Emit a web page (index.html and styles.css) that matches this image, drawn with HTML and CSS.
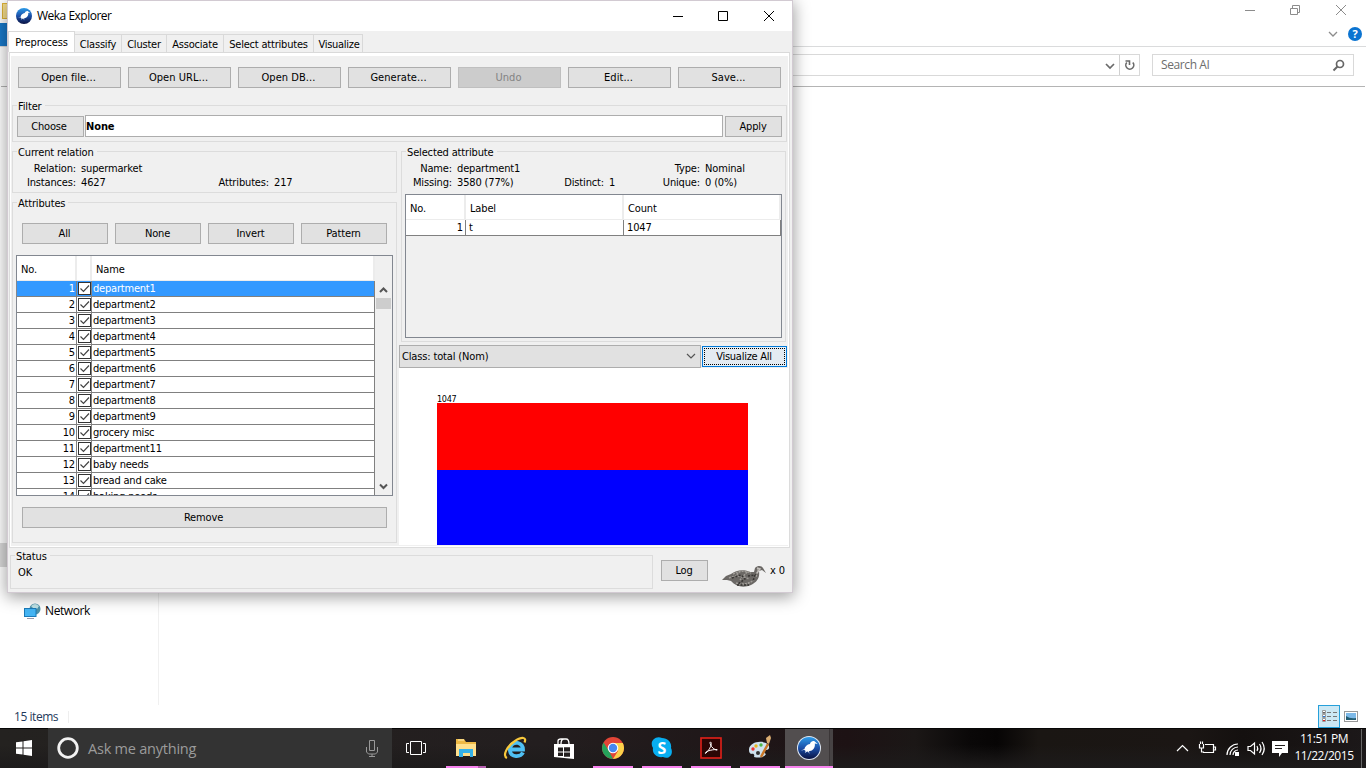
FILE: index.html
```html
<!DOCTYPE html>
<html lang="en">
<head>
<meta charset="utf-8">
<title>Weka Explorer</title>
<link rel="stylesheet" href="styles.css">
</head>
<body>
<svg width="0" height="0" class="defs">
  <symbol id="check" viewBox="0 0 13 13"><rect x=".5" y=".5" width="12" height="12" fill="#fff" stroke="#333"/><path d="M2.500 6.500l3 3 5.500-6" fill="none" stroke="#444" stroke-width="1.200"/></symbol>
  <symbol id="weka" viewBox="0 0 24 24"><circle cx="12" cy="12" r="12" fill="url(#wk)"/><path d="M3 15l4-2c.5-3 3-5 6-5.500 1-2.500 3-3.500 5-2.800l3.500 3-3.200-.7c.8 3.500-1.300 7-4.300 8l-2 .6.500 3-1.500-2.700-1.500.1-2 1.500.8-2.300c-.8-.3-1.300-.7-1.500-1.200z" fill="#fff"/></symbol>
  <linearGradient id="wk" x1="0" y1="0" x2="0" y2="1"><stop offset="0" stop-color="#2d9be8"/><stop offset=".5" stop-color="#1b4fa8"/><stop offset="1" stop-color="#0a1242"/></linearGradient>
</svg>

<div class="explorer">
  <div class="ex-title">
    <svg width="110" height="20" fill="none" stroke="#8c8c8c"><path d="M5 10.500h10M50.500 8.500h7v6h-7zM52.500 8v-2.500h7v7h-2M96 5l10 10M106 5l-10 10"/></svg>
  </div>
  <div class="ex-ribbon">
    <svg width="36" height="18"><path d="M1 7l4 4 4-4" fill="none" stroke="#8c8c8c" stroke-width="1.300"/><circle cx="27" cy="9" r="7" fill="#0b74d1"/><text x="27" y="13" text-anchor="middle" fill="#fff" class="help">?</text></svg>
  </div>
  <div class="ex-address">
    <div class="ex-path"><svg width="34" height="20" fill="none" stroke="#6a6a6a" stroke-width="1.700"><path d="M1 9l4 4 4-4"/><path stroke="#d0d0d0" stroke-width="1" d="M14.500 0v20"/><path d="M21.800 7.500a4 4 0 1 0 6 0M20.500 6h4v4" stroke-width="1.600"/></svg></div>
    <div class="ex-search"><span>Search AI</span><svg width="14" height="14" fill="none" stroke="#666" stroke-width="1.700"><circle cx="8" cy="6" r="3.500"/><path d="M5.500 8.500l-4 4" stroke-width="2"/></svg></div>
  </div>
  <div class="ex-body">
    <div class="ex-nav"><div class="ex-selected"></div>
      <div class="ex-net"><svg width="17" height="17"><circle cx="11" cy="6" r="5.500" fill="#4e93ab"/><path d="M7 3q4-4 8 0l-2 3-4-1z" fill="#bfe2e6"/><rect x=".5" y="5.500" width="11.500" height="8" fill="#45b5f4" stroke="#1b7ab8"/><path d="M3 15.500h7" stroke="#99a"/></svg><span>Network</span></div>
    </div>
  </div>
  <div class="ex-status"><span class="items">15 items</span>
    <div class="views"><div class="view-on"><svg width="22" height="22"><g fill="#fff" stroke="#9a9a9a"><path d="M4.500 5.500h3v3h-3zM4.500 9.500h3v3h-3zM4.500 13.500h3v3h-3z"/></g><path d="M5 7.500h2" stroke="#666"/><path d="M5 11.500h2" stroke="#27d"/><path d="M5 15.500h2" stroke="#d22"/><path d="M9 7.500h4M15 7.500h4M9 11.500h4M15 11.500h4M9 15.500h4M15 15.500h4" stroke="#777"/></svg></div>
    <svg width="14" height="12"><rect x=".5" y=".5" width="13" height="10" fill="#fff" stroke="#999"/><rect x="2" y="2" width="10" height="7" fill="#7db9e8"/><path d="M2 5q4 3 10 2v2h-10z" fill="#245d72"/></svg></div>
  </div>
</div>
<div class="backstrip"><div class="folder"></div><div class="filetab"></div></div>

<div class="weka">
  <div class="titlebar"><svg width="16" height="16"><use href="#weka"/></svg><span>Weka Explorer</span>
    <svg class="controls" width="102" height="12" fill="none" stroke="#000"><path d="M0 6.500h10M45.500 1.500h9v9h-9zM91 1l10 10M101 1l-10 10"/></svg></div>
  <div class="tabs"><div class="tab on">Preprocess</div><div class="tab t2">Classify</div><div class="tab t3">Cluster</div><div class="tab t4">Associate</div><div class="tab t5">Select attributes</div><div class="tab t6">Visualize</div></div>
  <div class="pane">
    <div class="toolbar"><div class="btn">Open file...</div><div class="btn">Open URL...</div><div class="btn">Open DB...</div><div class="btn">Generate...</div><div class="btn off">Undo</div><div class="btn">Edit...</div><div class="btn">Save...</div></div>
    <div class="group filter"><div class="legend">Filter</div>
      <div class="filter-row"><div class="btn choose">Choose</div><div class="field">None</div><div class="btn apply">Apply</div></div></div>
    <div class="columns">
      <div class="left">
        <div class="group relation"><div class="legend">Current relation</div>
          <div class="rel"><span class="r">Relation:</span><span>supermarket</span><span></span><span></span><span class="r">Instances:</span><span>4627</span><span class="r">Attributes:</span><span>217</span></div></div>
        <div class="group attrs"><div class="legend">Attributes</div>
          <div class="four"><div class="btn">All</div><div class="btn">None</div><div class="btn">Invert</div><div class="btn">Pattern</div></div>
          <div class="list">
            <div class="grid">
              <div class="head"><span>No.</span><span></span><span>Name</span></div>
              <div class="row sel"><span>1</span><svg><use href="#check"/></svg><span>department1</span></div>
              <div class="row"><span>2</span><svg><use href="#check"/></svg><span>department2</span></div>
              <div class="row"><span>3</span><svg><use href="#check"/></svg><span>department3</span></div>
              <div class="row"><span>4</span><svg><use href="#check"/></svg><span>department4</span></div>
              <div class="row"><span>5</span><svg><use href="#check"/></svg><span>department5</span></div>
              <div class="row"><span>6</span><svg><use href="#check"/></svg><span>department6</span></div>
              <div class="row"><span>7</span><svg><use href="#check"/></svg><span>department7</span></div>
              <div class="row"><span>8</span><svg><use href="#check"/></svg><span>department8</span></div>
              <div class="row"><span>9</span><svg><use href="#check"/></svg><span>department9</span></div>
              <div class="row"><span>10</span><svg><use href="#check"/></svg><span>grocery misc</span></div>
              <div class="row"><span>11</span><svg><use href="#check"/></svg><span>department11</span></div>
              <div class="row"><span>12</span><svg><use href="#check"/></svg><span>baby needs</span></div>
              <div class="row"><span>13</span><svg><use href="#check"/></svg><span>bread and cake</span></div>
              <div class="row"><span>14</span><svg><use href="#check"/></svg><span>baking needs</span></div>
            </div>
            <div class="scroll"><svg width="17" height="214"><path d="M5 10l3.500-3.500L12 10M5 202.500l3.500 3.500 3.500-3.500" fill="none" stroke="#555" stroke-width="2"/><rect x="1" y="16" width="15" height="11" fill="#cdcdcd"/></svg></div>
          </div>
          <div class="btn remove">Remove</div>
        </div>
      </div>
      <div class="right">
        <div class="group selected"><div class="legend">Selected attribute</div>
          <div class="info"><span class="r">Name:</span><span>department1</span><span></span><span></span><span class="r">Type:</span><span>Nominal</span><span class="r">Missing:</span><span>3580 (77%)</span><span class="r">Distinct:</span><span>1</span><span class="r">Unique:</span><span>0 (0%)</span></div>
          <div class="labels"><div class="lhead"><span>No.</span><span>Label</span><span>Count</span></div><div class="lrow"><span>1</span><span>t</span><span>1047</span></div></div>
        </div>
        <div class="classrow"><div class="combo"><span>Class: total (Nom)</span><svg width="10" height="7" fill="none" stroke="#555" stroke-width="1.200"><path d="M1 1l4 4 4-4"/></svg></div><div class="btn vis"><div>Visualize All</div></div></div>
        <div class="chart"><div class="count">1047</div><div class="red"></div><div class="blue"></div></div>
      </div>
    </div>
  </div>
  <div class="bottom">
    <div class="group status"><div class="legend">Status</div><div class="ok">OK</div></div>
    <div class="btn log">Log</div>
    <svg class="bird" width="46" height="24"><path d="M0 15l4-4 5-2c5-4 13-5 19-2l4 0 1-4c3-3 7-2 8 0l3 5-4-3-3 1c1 7-2 11-8 14-7 3-15 2-20-4l-4-1z" fill="#6b6865"/><path d="M11 9q10-5 18-1M7 13q10-4 20 1M14 18q10 3 18-3M18 6l-5 6M25 7l-7 8M36 4l-2 8" fill="none" stroke="#a19e99" stroke-width="1.500" stroke-dasharray="2 1"/><path d="M10 13l9-3 4 4-7 5M26 11l7-1-2 6M15 20h12" fill="none" stroke="#353331" stroke-width="1.500" stroke-dasharray="2 1.500"/><path d="M35 3l3 1-3 4" stroke="#c4c0bc" fill="none" stroke-width="1.500"/></svg>
    <span class="x0">x 0</span>
  </div>
</div>

<div class="taskbar">
  <div class="start"><svg width="16" height="16" fill="#fff"><path d="M0 2.300L6.500 1.400V7.500H0zM7.500 1.200L16 0V7.500H7.500zM0 8.500H6.500V14.600L0 13.700zM7.500 8.500H16V16L7.500 14.800z"/></svg></div>
  <div class="ask"><svg width="22" height="22"><circle cx="11" cy="11" r="9.300" fill="none" stroke="#f2f2f2" stroke-width="2.800"/></svg><span>Ask me anything</span><svg class="mic" width="12" height="17" fill="none" stroke="#999"><path d="M3.500.5h5v10h-5zM.5 7v5l2 2h7l2-2V7M6 14v2.500M3 16.500h6"/></svg></div>
  <div class="apps">
    <div class="app view"><svg width="22" height="14" fill="none" stroke="#fff"><path d="M5.500.5h11v13h-11zM4 2.500H1.500v9H4M18 2.500h2.500v9H18"/></svg></div>
    <div class="app run files"><svg width="22" height="20"><path d="M1 1h8l2 3h10v14H1z" fill="#eeb945"/><path d="M1 6h20v12H1z" fill="#ffe08c"/><path d="M3 2h6" stroke="#fff1b8"/><path d="M4 11h14v8h-3v-4H8v4H4z" fill="#34b1e8"/></svg></div>
    <div class="app"><svg width="24" height="24" fill="none"><path d="M20 16.500c-2.500 5-12 5-13-1.500-.8-6 4-9 8-8 3.500 1 5 3.500 5 6.500H8" stroke="#4fc0f3" stroke-width="3.800"/><path d="M4 22c-5-2 0-12 8-17C19 .5 24 1 21.500 6.500" stroke="#f8c83c" stroke-width="2.200"/></svg></div>
    <div class="app"><svg width="22" height="24"><path d="M1 8h20v15L1 21z" fill="#fff"/><path d="M5 8V5q0-2 3-2h5q3 0 3 5M8 8q0-5 3-5" fill="none" stroke="#fff" stroke-width="1.300"/><path d="M5 11.500h5v4H5zM11 11.200h6v4.300h-6zM5 16.500h5v3.600H5zM11 16.500h6v4.300h-6z" fill="#231f1f"/></svg></div>
    <div class="app run"><svg width="22" height="22"><circle cx="11" cy="11" r="11" fill="#e24537"/><path d="M1.500 5.500L7 14l4 8A11 11 0 0 1 1.500 5.500z" fill="#25a35b"/><path d="M11 6h9.800A11 11 0 0 1 11 22l5-8z" fill="#fbd14a"/><circle cx="11" cy="11" r="5.300" fill="#fff"/><circle cx="11" cy="11" r="4.200" fill="#4688f1"/></svg></div>
    <div class="app run"><svg width="24" height="24"><path d="M12 2c6 0 10 5 9 10 3 6-2 12-8 9C6 22 2 17 3 12-1 6 5-1 12 2z" fill="#08aef0"/><text x="12" y="18" text-anchor="middle" class="skype">S</text></svg></div>
    <div class="app run"><svg width="22" height="22"><rect x="1" y="1" width="20" height="20" fill="#2b0605" stroke="#e32119" stroke-width="1.600"/><path d="M10.500 5c2 1 0 7-5 11.500-1.500-1 4-4 11.500-4 1.500 1.500-3 .5-5.500-3-1.500-2.500-2-4.500-1-4.500z" fill="none" stroke="#fff" stroke-width="1"/></svg></div>
    <div class="app run"><svg width="26" height="26"><path d="M2 14C3 8 12 5 19 8c4 2 4 6 1 7-3 0-4 2-1 4-2 4-8 4-12 3 1-3-1-4-3-3-2-1-2-3-2-5z" fill="#cfe2ef"/><circle cx="6" cy="14" r="1.700" fill="#e33"/><circle cx="9" cy="11" r="1.700" fill="#e8b51e"/><circle cx="14" cy="10" r="1.700" fill="#4db848"/><circle cx="11" cy="18" r="2" fill="#333"/><path d="M14 22l7-13" stroke="#c87728" stroke-width="2.500"/><path d="M20 8l-1-5 4-3 1 3-2 6z" fill="#dcae72"/></svg></div>
    <div class="app run active"><svg width="24" height="24"><circle cx="12" cy="12" r="12" fill="#dfe8f4"/><svg x="1" y="1" width="22" height="22"><use href="#weka"/></svg></svg></div>
  </div>
  <svg class="tray" width="112" height="20" fill="none" stroke="#fff" stroke-width="1.200"><path d="M1 12l5.500-5.500L12 12"/><path d="M29 5.500h8.500v8H27M38 8h1.500v3H38M23.500 5v4h4V5M24.500 5V2.500M26.500 5V2.500M25.500 9v4H28"/><path d="M51 16A11 11 0 0 1 62 5M54 16a8 8 0 0 1 8-8M57 16a5 5 0 0 1 5-5"/><path d="M59 13h4v4h-4z" fill="#fff" stroke="none"/><path d="M72 7.500h2.500l4-3.500v11l-4-3.500H72zM81 7q1.500 2.500 0 5M83.500 5q3 4.500 0 9M86 3q4.500 6.500 0 13"/><path d="M96 2h16v12h-6l-3 4v-4h-7z" fill="#fff" stroke="none"/><path d="M99 6.500h10M99 9.500h7" stroke="#231f1f"/></svg>
  <div class="clock"><div>11:51 PM</div><div>11/22/2015</div></div>
  <div class="peek"></div>
</div>
</body>
</html>
```

FILE: styles.css
```css
* { box-sizing: border-box; }
body { margin: 0; width: 1366px; height: 768px; overflow: hidden; background: #fff; position: relative; font-family: "Open Sans", "Noto Sans", sans-serif; font-size: 12px; color: #000; }
svg { display: block; flex: none; }
.defs { position: absolute; }
span, .btn, .tab, .legend { white-space: nowrap; }

/* file manager behind */
.explorer { position: absolute; left: 0; top: 0; width: 1366px; height: 728px; display: flex; flex-direction: column; background: #fff; }
.ex-title { height: 23px; display: flex; justify-content: flex-end; padding-right: 16px; }
.ex-ribbon { height: 24px; border-bottom: 1px solid #dadbdc; display: flex; justify-content: flex-end; padding: 2px 2px 0 0; }
.help { font: bold 11px "Open Sans", sans-serif; }
.ex-address { height: 40px; border-bottom: 1px solid #b4b4b4; margin: 0 1px; padding: 7px 11px 0 0; display: flex; gap: 12px; }
.ex-path { flex: 1; height: 22px; border: 1px solid #d9d9d9; margin-left: 10px; display: flex; justify-content: flex-end; }
.ex-search { width: 202px; height: 22px; border: 1px solid #d9d9d9; display: flex; align-items: center; justify-content: space-between; padding: 0 7px 1px 8px; color: #6d6d6d; letter-spacing: -.4px; }
.ex-body { height: 618px; display: flex; }
.ex-nav { width: 159px; border-right: 1px solid #f0f0f0; padding-top: 456px; }
.ex-selected { width: 60px; height: 24px; background: #d9d9d9; }
.ex-net { display: flex; align-items: center; gap: 4px; padding: 34px 0 0 24px; letter-spacing: -.4px; }
.ex-net svg { margin-top: 2px; }
.ex-status { height: 23px; display: flex; justify-content: space-between; color: #1e395b; }
.items { height: 12px; line-height: 12px; margin: 6px 0 0 14px; padding-right: 9px; border-right: 1px solid #eee; width: 55px; letter-spacing: -.45px; }
.views { display: flex; align-items: center; gap: 4px; padding-right: 8px; }
.view-on { width: 22px; height: 23px; background: #cce8f4; border: 1px solid #26a0da; }
.view-on svg { margin: -1px; }
.backstrip { position: absolute; left: 0; top: 0; width: 8px; height: 47px; padding-top: 3px; }
.folder { width: 10px; height: 16px; margin: 0 0 4px 2px; background: #f8e08e; border: 1px solid #dfb33a; }
.filetab { height: 23px; background: #1979ca; }

/* main window */
.weka { position: absolute; left: 7px; top: 0; width: 786px; height: 593px; border: 1px solid #d2cad2; background: #f0f0f0; box-shadow: 0 3px 15px 1px rgba(0,0,0,.38); font: 11px/14px "DejaVu Sans Condensed", "DejaVu Sans", sans-serif; letter-spacing: -.15px; display: flex; flex-direction: column; }
.titlebar { height: 30px; background: #fff; display: flex; align-items: center; padding: 0 17px 1px 8px; gap: 5px; font: 12px "Open Sans", sans-serif; letter-spacing: -.5px; }
.controls { margin-left: auto; }
.tabs { height: 21px; display: flex; align-items: flex-end; }
.tab { height: 18px; border: 1px solid #d9d9d9; border-left: 0; border-bottom: 0; text-align: center; line-height: 19px; letter-spacing: -.2px; }
.tab.on { width: 67px; height: 21px; background: #fff; line-height: 22px; border-left: 1px solid #d9d9d9; letter-spacing: -.1px; }
.t2 { width: 47px; } .t3 { width: 45px; } .t4 { width: 57px; } .t5 { width: 90px; } .tab.t6 { width: 49px; padding-left: 2px; letter-spacing: -.3px; }
.pane { width: 781px; height: 496px; margin-left: 1px; border: 1px solid #dcdcdc; padding: 0 2px; outline: 1px solid #fff; outline-offset: -2px; border-top-color: #d9d9d9; }
.toolbar { display: flex; gap: 7px; padding: 11px 0 0 8px; height: 49px; border-top: 3px solid #fff; margin: 0 -2px; letter-spacing: .05px; }
.btn { height: 21px; background: #e1e1e1; border: 1px solid #adadad; display: flex; align-items: center; justify-content: center; padding-right: 1px; }
.toolbar .btn { width: 103px; padding-right: 2px; }
.btn.off { background: #ccc; border-color: #bfbfbf; color: #838383; }
.group { border: 1px solid #dcdcdc; }
.legend { width: max-content; height: 14px; line-height: 16px; background: #f0f0f0; margin: -7px 0 0 4px; padding: 0 3px 0 1px; }
.filter { height: 37px; margin-top: 3px; }
.filter-row { display: flex; align-items: flex-end; padding: 2px 0 0 4px; }
.choose { width: 67px; padding-right: 3px; }
.field { width: 638px; height: 22px; margin: 0 2px 0 1px; border: 1px solid #adadad; background: #fff; font-weight: bold; line-height: 21px; letter-spacing: -.1px; }
.apply { width: 57px; }
.columns { display: flex; }
.left { width: 385px; padding-top: 9px; }
.relation { height: 42px; }
.rel, .info { display: grid; padding-top: 3px; grid-auto-rows: 14px; }
.rel { grid-template-columns: 63px 128px 55px 60px; column-gap: 5px; }
.r { text-align: right; }
.attrs { height: 341px; margin-top: 9px; }
.four { display: flex; gap: 7px; padding: 13px 0 0 9px; }
.four .btn { width: 86px; }
.list { width: 377px; height: 241px; margin: 11px 0 0 3px; border: 1px solid #828790; display: flex; overflow: hidden; }
.grid { width: 358px; height: 239px; overflow: hidden; background: #fff; }
.head { height: 25px; display: grid; grid-template: 25px / 60px 15px 283px; line-height: 27px; }
.head span { height: 25px; border-right: 2px solid #ececec; padding-left: 4px; border-bottom: 1px solid #ececec; }
.row { height: 16px; display: grid; grid-template: 15px / 60px 15px 283px; border-bottom: 1px solid #808080; line-height: 16px; }
.row span { height: 15px; }
.row span:first-child { text-align: right; border-right: 1px solid #808080; padding-right: 1px; }
.row svg { width: 13px; height: 13px; margin: 1px; }
.row span:last-child { border-left: 1px solid #808080; border-right: 1px solid #808080; margin-left: -1px; padding-left: 1px; letter-spacing: -.2px; }
.sel { background: #3399ff; color: #fff; }
.scroll { width: 17px; padding-top: 26px; }
.remove { width: 365px; margin: 11px 0 0 9px; padding-right: 2px; }
.right { width: 390px; padding: 9px 0 0 2px; }
.selected { width: 385px; height: 191px; margin-left: 2px; }
.info { grid-template-columns: 50px 89px 53px 40px 46px 70px; column-gap: 5px; }
.labels { width: 377px; height: 144px; border: 1px solid #828790; margin: 4px 0 0 3px; }
.lhead, .lrow { display: grid; grid-template-columns: 60px 158px 157px; }
.lhead { height: 25px; line-height: 27px; grid-template-rows: 24px; background: #fff; border-bottom: 1px solid #ececec; }
.lhead span { border-right: 2px solid #ececec; padding-left: 4px; }
.lrow { height: 16px; line-height: 16px; grid-template-rows: 15px; background: #fff; border-bottom: 1px solid #808080; }
.lrow span { border-right: 1px solid #808080; padding-left: 3px; }
.lrow span:first-child { text-align: right; padding-right: 2px; }
.classrow { display: flex; align-items: center; gap: 1px; margin-top: 3px; }
.combo { width: 302px; height: 23px; background: #e1e1e1; border: 1px solid #adadad; display: flex; align-items: center; justify-content: space-between; padding: 0 4px 0 2px; }
.vis { width: 85px; background: #e5f1fb; border: 1px solid #0078d7; padding: 1px; letter-spacing: -.25px; }
.vis div { width: 100%; height: 100%; border: 1px dotted #000; display: flex; align-items: center; justify-content: center; background: #e4ebf2; padding-right: 1px; }
.chart { width: 389px; height: 177px; background: #fff; padding: 25px 0 0 38px; }
.count { height: 10px; font-size: 9px; line-height: 12px; letter-spacing: -.3px; }
.red { width: 311px; height: 67px; background: #f00; }
.blue { width: 311px; height: 75px; background: #00f; }
.bottom { display: flex; padding: 7px 0 0 2px; }
.status { width: 643px; height: 34px; }
.ok { padding: 3px 0 0 7px; }
.log { width: 47px; margin: 5px 0 0 8px; }
.bird { margin: 10px 0 0 14px; }
.x0 { margin: 9px 0 0 2px; }

/* taskbar */
.taskbar { position: absolute; left: 0; top: 728px; width: 1366px; height: 40px; background: linear-gradient(0deg, #1d1b1b, transparent 60%), linear-gradient(90deg, #242220, #231e1f 40%, #1d1214 62%, #1b1716 67%, #0a0808 71%, #070505 73%, #1a1613 76%, #1b1614 87%, #14100f 91%, #1c1819); border-top: 1px solid #070707; display: flex; color: #fff; }
.start { width: 48px; padding: 11px 0 0 16px; }
.ask { width: 344px; background: #333; margin-top: -1px; display: flex; align-items: center; padding: 0 14px 0 9px; color: #9b9b9b; font-size: 14.500px; letter-spacing: -.22px; }
.ask span { margin-left: 9px; }
.mic { margin-left: auto; }
.apps { display: flex; }
.app { width: 49px; display: flex; align-items: center; justify-content: center; border-bottom: 2px solid transparent; }
.view { padding: 1px 2px 0 0; }
.run { width: 40px; margin: 0 4px 0 5px; border-bottom-color: #f783ee; }
.files { border-bottom: 0; padding-bottom: 2px; background: linear-gradient(90deg, #f783ee 32px, #b65fb0 32px) bottom / 100% 2px no-repeat; }
.active { width: 48px; margin-left: 1px; background: linear-gradient(90deg, #524e4f 44px, #302b2c 44px, #474344 45px) padding-box; }
.skype { font: bold 16px "Open Sans", sans-serif; fill: #fff; }
.tray { margin: 10px 0 0 auto; }
.clock { width: 68px; margin: 1px 0 0 3px; padding-right: 2px; text-align: center; font-size: 12px; line-height: 17px; letter-spacing: -.45px; }
.peek { width: 5px; margin-left: 2px; border-left: 1px solid #666; }
```
